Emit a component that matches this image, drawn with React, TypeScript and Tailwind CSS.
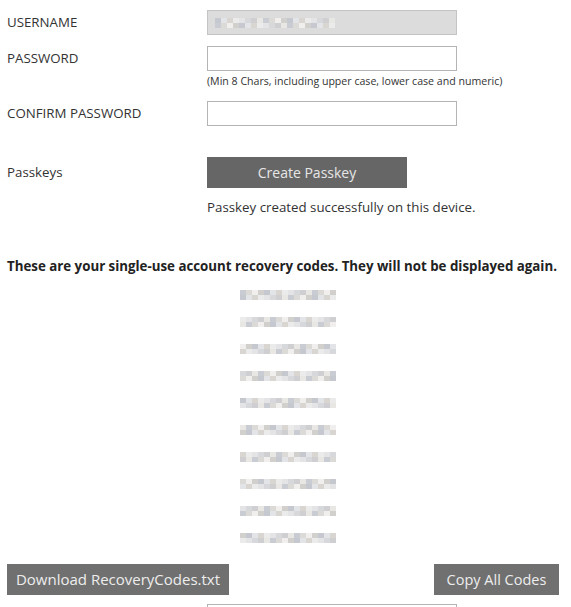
import React from 'react';

const greys = ['#e4e4e6', '#d6d8dc', '#cfcfd1', '#e9e7e3', '#c9ccd2', '#dcdad6', '#f0efed', '#d2d0cc', '#c6c8cf', '#e2e4e8', '#d9d5d0', '#ebebeb'];

function mosaic(seed: number, cols: number) {
    const cells: string[] = [];
    let s = seed;
    for (let i = 0; i < cols * 2; i++) {
        s = (s * 9301 + 49297) % 233280;
        cells.push(greys[s % greys.length]);
    }
    return cells;
}

const Blur: React.FC<{ seed: number; cols: number }> = ({ seed, cols }) => (
    <div className="grid" style={{ gridTemplateColumns: `repeat(${cols}, 6px)` }}>
        {mosaic(seed, cols).map((c, i) => (
            <div key={i} className="h-[5px]" style={{ background: c }} />
        ))}
    </div>
);

const Row: React.FC<{ label: string; children: React.ReactNode; className?: string }> = ({ label, children, className }) => (
    <div className={`flex items-start ${className ?? ''}`}>
        <div className="w-[200px] shrink-0 text-[13.3px] leading-[25px] text-[#333]">{label}</div>
        <div>{children}</div>
    </div>
);

export default function App() {
    return (
        <div className="w-[571px] h-[607px] overflow-hidden bg-white pl-[7px] pt-[10px]" style={{ fontFamily: '"Open Sans", "Noto Sans", sans-serif' }}>
            <Row label="USERNAME">
                <div className="w-[250px] h-[25px] border border-[#c4c4c4] bg-[#dcdcdc] flex items-center pl-[7px]">
                    <Blur seed={7} cols={20} />
                </div>
            </Row>

            <Row label="PASSWORD" className="mt-[11px]">
                <div className="w-[250px] h-[25px] border border-[#b4b4b4] bg-white" />
                <div className="text-[10.6px] leading-[13px] mt-[4px] text-[#333]">(Min 8 Chars, including upper case, lower case and numeric)</div>
            </Row>

            <Row label="CONFIRM PASSWORD" className="mt-[13px]">
                <div className="w-[250px] h-[25px] border border-[#b4b4b4] bg-white" />
            </Row>

            <Row label="Passkeys" className="mt-[34px]">
                <button className="w-[200px] h-[31px] bg-[#666666] text-[#e6e6e6] text-[14px] -mt-[3px]">Create Passkey</button>
                <div className="text-[13.3px] leading-[18px] mt-[10px] text-[#333]">Passkey created successfully on this device.</div>
            </Row>

            <div className="mt-[41px] text-[13.3px] font-bold text-[#222] leading-[18px] whitespace-nowrap">
                These are your single-use account recovery codes. They will not be displayed again.
            </div>

            <div className="flex flex-col items-start pl-[233px] mt-[15px] gap-[17px]">
                {Array.from({ length: 10 }).map((_, i) => (
                    <Blur key={i} seed={i * 31 + 3} cols={16} />
                ))}
            </div>

            <div className="flex justify-between items-center mt-[21px] pr-[12px]">
                <button className="w-[222px] h-[31px] bg-[#707070] text-[#ededed] text-[15px]">Download RecoveryCodes.txt</button>
                <button className="w-[125px] h-[31px] bg-[#707070] text-[#ededed] text-[14.5px]">Copy All Codes</button>
            </div>

            <div className="ml-[200px] mt-[9px] w-[250px] h-[25px] border border-[#b4b4b4] bg-white" />
        </div>
    );
}
